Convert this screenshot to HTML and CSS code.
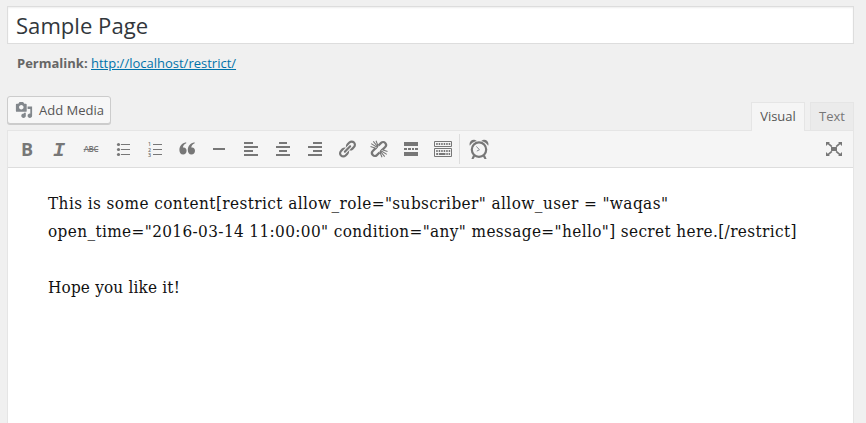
FILE: index.html
```html
<!DOCTYPE html>
<html lang="en">
<head>
<meta charset="utf-8">
<title>Edit Page</title>
<link rel="stylesheet" href="styles.css">
</head>
<body>
<main class="edit">
  <div class="title">Sample Page</div>
  <div class="permalink"><strong>Permalink:</strong> <a href="#">http://localhost/restrict/</a></div>
  <div class="tools">
    <button class="media"><svg width="18" height="18" viewBox="0 0 20 20"><path d="M13 11V4c0-.55-.45-1-1-1h-1.67L9 1H5L3.67 3H2c-.55 0-1 .45-1 1v7c0 .55.45 1 1 1h10c.55 0 1-.45 1-1zM7 4.500c1.380 0 2.500 1.120 2.500 2.500S8.380 9.500 7 9.500 4.500 8.380 4.500 7 5.620 4.500 7 4.500zM14 6h5v10.500c0 1.380-1.120 2.500-2.500 2.500S14 17.880 14 16.500s1.120-2.500 2.500-2.500c.17 0 .34.02.5.05V9h-3V6zm-4 8.050V13h2v3.500c0 1.380-1.120 2.500-2.500 2.500S7 17.880 7 16.500 8.120 14 9.500 14c.17 0 .34.02.5.05z"/></svg><span>Add Media</span></button>
    <div class="tabs"><div class="tab active">Visual</div><div class="tab">Text</div></div>
  </div>
  <section class="editor">
    <div class="toolbar">
      <span class="tool bold">B</span>
      <span class="tool italic">I</span>
      <span class="tool strike">ABC</span>
      <svg class="tool" viewBox="0 0 20 20"><circle cx="5.500" cy="5.500" r="1.600"/><circle cx="5.500" cy="10.500" r="1.600"/><circle cx="5.500" cy="15.500" r="1.600"/><path d="M8 5h9v1H8zM8 10h9v1H8zM8 15h9v1H8z"/></svg>
      <svg class="tool digits" viewBox="0 0 20 20"><text x="3.300" y="7">1</text><text x="3.300" y="12.500">2</text><text x="3.300" y="18">3</text><path d="M8 5h9v1H8zM8 10h9v1H8zM8 15h9v1H8z"/></svg>
      <svg class="tool" viewBox="0 0 20 20"><path d="M9.300 4.200C7.200 5 6 6.500 5.900 8.600c2.200-.5 3.700 1 3.700 3.200 0 2.300-1.500 3.700-3.500 3.700-2.400 0-3.700-1.800-3.700-4.500 0-4 2.500-7 6.700-7.800zM17.700 4.200c-2.100.8-3.300 2.300-3.400 4.400 2.200-.5 3.700 1 3.700 3.200 0 2.300-1.500 3.700-3.500 3.700-2.400 0-3.700-1.800-3.700-4.500 0-4 2.500-7 6.700-7.800z"/></svg>
      <svg class="tool" viewBox="0 0 20 20"><path d="M4 9h12v2H4z"/></svg>
      <svg class="tool" viewBox="0 0 20 20"><path d="M3 3h9v2H3zM3 7h14v2H3zM3 11h9v2H3zM3 15h14v2H3z"/></svg>
      <svg class="tool" viewBox="0 0 20 20"><path d="M6 3h8v2H6zM3 7h14v2H3zM6 11h8v2H6zM3 15h14v2H3z"/></svg>
      <svg class="tool" viewBox="0 0 20 20"><path d="M8 3h9v2H8zM3 7h14v2H3zM8 11h9v2H8zM3 15h14v2H3z"/></svg>
      <svg class="tool" viewBox="0 0 20 20"><path d="M17.740 2.760c1.680 1.690 1.680 4.410 0 6.100l-1.530 1.520c-1.120 1.120-2.700 1.470-4.140 1.090l2.620-2.610.76-.77.76-.76c.84-.84.84-2.200 0-3.040-.84-.85-2.200-.85-3.040 0l-.77.76-3.380 3.380c-.37-1.440-.02-3.020 1.100-4.140l1.520-1.530c1.690-1.680 4.420-1.680 6.100 0zM8.590 13.430l5.340-5.340c.42-.42.42-1.100 0-1.520-.44-.43-1.130-.39-1.530 0l-5.330 5.340c-.42.42-.42 1.100 0 1.520.44.43 1.130.39 1.520 0zm-.76 2.290l4.140-4.150c.38 1.440.03 3.020-1.090 4.140l-1.520 1.530c-1.690 1.680-4.410 1.680-6.100 0-1.680-1.680-1.680-4.420 0-6.100l1.530-1.520c1.120-1.120 2.700-1.470 4.140-1.100l-4.140 4.150c-.85.84-.85 2.200 0 3.050.84.84 2.200.84 3.040 0z"/></svg>
      <svg class="tool" viewBox="0 0 20 20"><g class="line"><path stroke-width="2.200" d="M9.500 6.500l2.600-2.600c1.200-1.200 3-1.200 4.100 0s1.200 2.900 0 4.100l-2.600 2.600M10.500 13.500l-2.600 2.600c-1.200 1.200-3 1.200-4.100 0s-1.200-2.900 0-4.100l2.600-2.600"/><path stroke-width="1.100" d="M8.800 8.800 2.200 4.600M8.900 8 4.300 2.300M9.300 7.500 7 1.800M8 9.700 1.500 7.600M11.200 11.200l6.600 4.200M11.100 12l4.600 5.700M10.700 12.500l2.300 5.700M12 10.300l6.500 2.100"/></g></svg>
      <svg class="tool" viewBox="0 0 20 20"><path d="M3 3h14v4H3zM3 9h3v2H3zM7 9h3v2H7zM11 9h2v2h-2zM14 9h3v2h-3zM3 13h14v4H3z"/></svg>
      <svg class="tool" viewBox="0 0 20 20"><g class="line"><path d="M1.500 2.500h17v5h-17zM1.500 9.500h17v8h-17z"/><path stroke-width="2" stroke-dasharray="1.500 1" d="M3.200 5h14M3.200 12h14"/><path stroke-width="2" d="M3.200 15h2M6 15h6.500M13.300 15h1.500M15.600 15h1.500"/></g></svg>
      <span class="separator"></span>
      <svg class="tool" viewBox="0 0 20 20"><path d="M.8 6.700C-.3 3.500 2 .4 5.300.7c1.100.1 1.900.6 2.400 1.200C4.600 2.600 2 4.300.8 6.700zM19.200 6.700c1.100-3.200-1.200-6.300-4.500-6-1.100.1-1.900.6-2.400 1.200 3.100.7 5.700 2.400 6.900 4.800zM4.100 16l2 1.600L4.500 20H2.400zM15.900 16l-2 1.600 1.600 2.400h2.100z"/><g class="line"><circle cx="10" cy="10.600" r="7.200" stroke-width="2.200"/><path stroke="#82878c" d="M7.300 7.500l3.200 3.200-2.700 1.400"/></g></svg>
      <svg class="tool expand" viewBox="0 0 20 20"><path d="M7 8h6v4H7zM2 3h4L4.900 4.100l3.500 3-1.100 1.200-3.500-3L2 7zM18 3h-4l1.100 1.100-3.500 3 1.100 1.200 3.500-3L18 7zM2 17h4l-1.100-1.100 3.500-3-1.100-1.200-3.500 3L2 13zM18 17h-4l1.100-1.100-3.500-3 1.100-1.200 3.500 3L18 13z"/></svg>
    </div>
    <div class="content">
      <p><span class="line-one">This is some content[restrict allow_role="subscriber" allow_user = "waqas"</span><br><span class="line-two">open_time="2016-03-14 11:00:00" condition="any" message="hello"] secret here.[/restrict]</span></p>
      <p class="line-three">Hope you like it!</p>
    </div>
  </section>
</main>
</body>
</html>
```
FILE: styles.css
```css
* { box-sizing: border-box; }
body { margin: 0; height: 423px; overflow: hidden; background: #f0f0f0; color: #666; font: 13px/20px "Open Sans", sans-serif; }
.edit { display: flex; flex-direction: column; width: 847px; height: 423px; margin-left: 7px; padding-top: 6px; }
.title { height: 38px; padding: 0 8px; border: 1px solid #ddd; background: #fff; box-shadow: inset 0 1px 2px rgba(0,0,0,.07); color: #32373c; font-size: 22.1px; line-height: 37px; }
.permalink { height: 52px; padding: 9px 10px 0; }
.permalink a { color: #0073aa; }
.tools { display: flex; justify-content: space-between; height: 34px; }
.media { display: flex; align-items: center; width: 104px; height: 28px; padding: 0 0 0 7px; border: 1px solid #ccc; border-radius: 3px; background: #f7f7f7; box-shadow: 0 1px 0 #ccc; color: #555; font: 13px/26px "Open Sans", sans-serif; white-space: nowrap; }
.media svg { flex: none; margin-right: 6px; fill: #82878c; }
.tabs { display: flex; align-items: flex-start; gap: 5px; padding-top: 6px; }
.tab { width: 44px; height: 28px; border: 1px solid #e5e5e5; border-bottom: 0; background: #ebebeb; color: #777; line-height: 27px; text-align: center; }
.tab.active { position: relative; z-index: 1; width: 54px; height: 29px; background: #f5f5f5; color: #555; }
.editor { flex: 1; border: 1px solid #e5e5e5; border-bottom: 0; background: #fff; }
.toolbar { display: flex; align-items: center; gap: 12px; height: 37px; padding: 0 9px; border-bottom: 1px solid #ddd; background: #f5f5f5; color: #777; }
.tool { flex: none; width: 20px; height: 20px; fill: #777; line-height: 20px; text-align: center; }
.bold { font: bold 18px/20px "Open Sans", sans-serif; }
.italic { padding-top: 2px; font: italic bold 20px/20px "Liberation Mono", monospace; }
.strike { font-size: 8px; font-weight: 600; letter-spacing: -.3px; text-decoration: line-through; }
.digits text { font: 4.600px "Open Sans", sans-serif; stroke: #777; stroke-width: .2px; }
.line { fill: none; stroke: #777; }
.separator { width: 1px; height: 30px; margin: 0 -3px 0 -6px; background: #ddd; }
.expand { margin-left: auto; }
.content { padding: 21px 40px; color: #111; font: 17px/28px "DejaVu Serif Condensed", "DejaVu Serif", serif; font-stretch: condensed; white-space: nowrap; }
.content p { margin: 0 0 28px; }
.line-one { letter-spacing: .42px; }
.line-two { letter-spacing: .38px; }
.line-three { letter-spacing: .18px; }
```
